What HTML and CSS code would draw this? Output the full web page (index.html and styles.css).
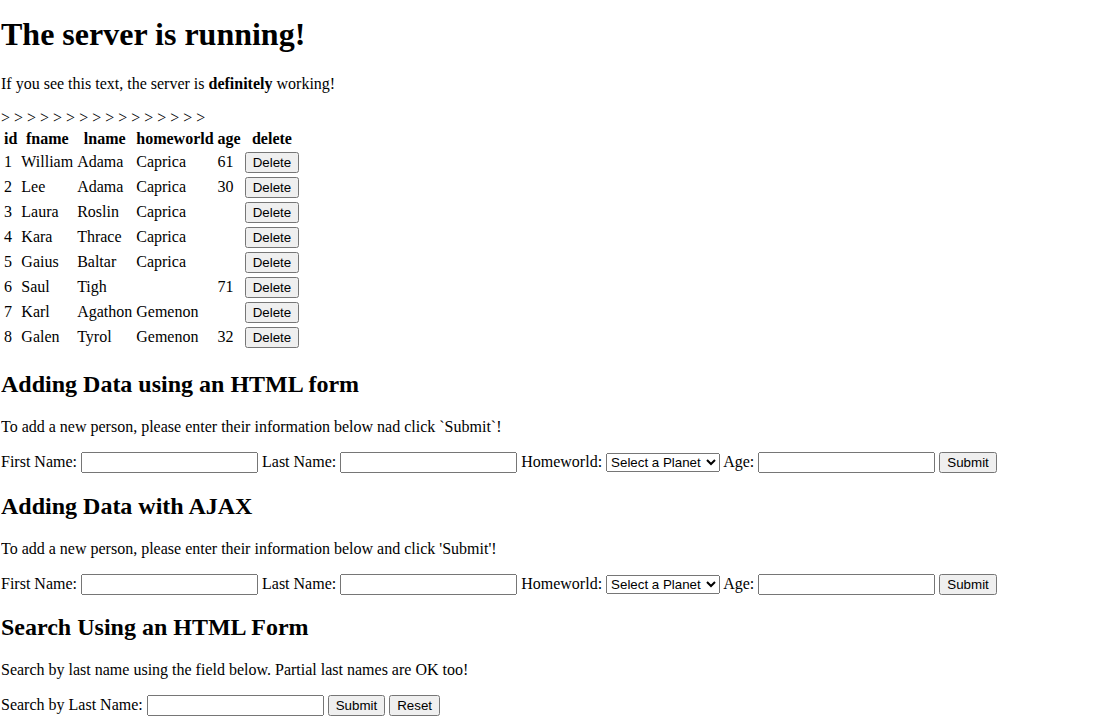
FILE: index.html
```html
<!DOCTYPE html>
<html>
<head>
<meta charset="utf-8">
<title>Server</title>
<link rel="stylesheet" href="styles.css">
</head>
<body>
<h1 class="title">The server is running!</h1>
<p>If you see this text, the server is <b>definitely</b> working!</p>
&gt; &gt; &gt; &gt; &gt; &gt; &gt; &gt; &gt; &gt; &gt; &gt; &gt; &gt; &gt; &gt;
<table>
<thead>
<tr><th>id</th><th>fname</th><th>lname</th><th>homeworld</th><th>age</th><th>delete</th></tr>
</thead>
<tbody>
<tr><td>1</td><td>William</td><td>Adama</td><td>Caprica</td><td>61</td><td><button>Delete</button></td></tr>
<tr><td>2</td><td>Lee</td><td>Adama</td><td>Caprica</td><td>30</td><td><button>Delete</button></td></tr>
<tr><td>3</td><td>Laura</td><td>Roslin</td><td>Caprica</td><td></td><td><button>Delete</button></td></tr>
<tr><td>4</td><td>Kara</td><td>Thrace</td><td>Caprica</td><td></td><td><button>Delete</button></td></tr>
<tr><td>5</td><td>Gaius</td><td>Baltar</td><td>Caprica</td><td></td><td><button>Delete</button></td></tr>
<tr><td>6</td><td>Saul</td><td>Tigh</td><td></td><td>71</td><td><button>Delete</button></td></tr>
<tr><td>7</td><td>Karl</td><td>Agathon</td><td>Gemenon</td><td></td><td><button>Delete</button></td></tr>
<tr><td>8</td><td>Galen</td><td>Tyrol</td><td>Gemenon</td><td>32</td><td><button>Delete</button></td></tr>
</tbody>
</table>

<h2>Adding Data using an HTML form</h2>
<p>To add a new person, please enter their information below nad click `Submit`!</p>
<form>
<label>First Name:</label> <input type="text">
<label>Last Name:</label> <input type="text">
<label>Homeworld:</label> <select><option>Select a Planet</option><option>Caprica</option><option>Gemenon</option></select>
<label>Age:</label> <input type="text">
<input type="submit" value="Submit">
</form>

<h2>Adding Data with AJAX</h2>
<p>To add a new person, please enter their information below and click 'Submit'!</p>
<form>
<label>First Name:</label> <input type="text">
<label>Last Name:</label> <input type="text">
<label>Homeworld:</label> <select><option>Select a Planet</option><option>Caprica</option><option>Gemenon</option></select>
<label>Age:</label> <input type="text">
<input type="submit" value="Submit">
</form>

<h2>Search Using an HTML Form</h2>
<p>Search by last name using the field below. Partial last names are OK too!</p>
<form>
<label>Search by Last Name:</label> <input type="text">
<input type="submit" value="Submit">
<input type="reset" value="Reset">
</form>
</body>
</html>
```
FILE: styles.css
```css
html {
  background: #fff;
}
body {
  margin: 2px 2px 2px 1px;
  font-family: "Liberation Serif", "Times New Roman", serif;
  font-size: 16px;
  color: #000;
}
.title {
  margin-top: 14.44px;
}
input, select, button {
  font-family: "Liberation Sans", Arial, sans-serif;
  font-size: 13.333px;
}
input[type="text"] {
  box-sizing: border-box;
  width: 177px;
}
select {
  width: 114px;
}
```
